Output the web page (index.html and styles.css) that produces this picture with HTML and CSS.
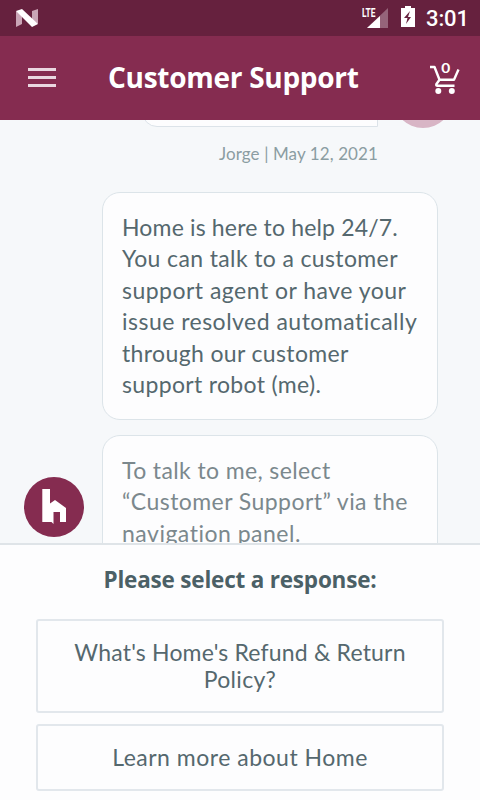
FILE: index.html
```
<!DOCTYPE html>
<html lang="en">
<head>
<meta charset="utf-8">
<title>Customer Support</title>
<link rel="stylesheet" href="styles.css">
</head>
<body>
<div class="app">
  <div class="status">
    <svg class="n-logo" width="24" height="20" viewBox="0 0 24 20"><path d="M1 3l6 4v9l-6 3zM17 3l6-2v15l-6-4z" fill="#c9a5b6"/><path d="M1 3l6-2 16 15-6 3z" fill="#fff"/></svg>
    <div class="status-right">
      <svg class="signal" width="28" height="24" viewBox="0 0 28 24"><path d="M26 3v20H5z" fill="#95647a"/><path d="M18 11v12H5z" fill="#fff"/><text x="0" y="12" class="lte" textLength="13.500" lengthAdjust="spacingAndGlyphs">LTE</text></svg>
      <svg class="battery" width="14" height="23" viewBox="0 0 14 23"><path d="M0 3h4V1h6v2h4v19H0z" fill="#fff"/><path d="M9 6l-6 7h3.500l-1.500 6 5-7H7z" fill="#66213e"/></svg>
      <span class="clock">3:01</span>
    </div>
  </div>
  <header class="bar">
    <div class="menu"><i></i><i></i><i></i></div>
    <h1>Customer Support</h1>
    <svg class="cart" width="34" height="36" viewBox="428 58 34 36" fill="none" stroke="#fff" stroke-width="2.400" stroke-linejoin="round"><path d="M430 65h4.500l5 12.800H454l4.500-10.300M439.500 77.800l-3.200 4.500q-.4 1.500 1.200 1.500h17"/><g fill="#fff" stroke="none"><circle cx="438.300" cy="89" r="3"/><circle cx="451.800" cy="89" r="3"/><text x="441.300" y="71" class="count" textLength="9" lengthAdjust="spacingAndGlyphs">0</text></g></svg>
  </header>
  <main class="chat">
    <div class="previous"><div class="prev-bubble"></div><div class="prev-avatar"></div></div>
    <div class="stamp"><span>Jorge | May 12, 2021</span></div>
    <div class="bubble">
      <p class="a1">Home is here to help 24/7.</p>
      <p class="a2">You can talk to a customer</p>
      <p class="a3">support agent or have your</p>
      <p class="a4">issue resolved automatically</p>
      <p class="a5">through our customer</p>
      <p class="a6">support robot (me).</p>
    </div>
    <div class="row">
      <svg class="avatar" width="60" height="60" viewBox="24 477 60 60"><circle cx="54" cy="507" r="30" fill="#852c50"/><path d="M42.300 489h7.700v14.500l5-3.500 11 8v14h-6v-10h-6.500v12l-2-2h-9.200z" fill="#fff"/></svg>
      <div class="bubble fading">
        <p class="b1">To talk to me, select</p>
        <p class="b2">“Customer Support” via the</p>
        <p class="b3">navigation panel.</p>
      </div>
    </div>
  </main>
  <section class="responses">
    <h2>Please select a response:</h2>
    <button class="tall"><span class="c1">What's Home's Refund &amp; Return</span><span class="c2">Policy?</span></button>
    <button><span class="c3">Learn more about Home</span></button>
  </section>
</div>
</body>
</html>
```
FILE: styles.css
```
* { box-sizing: border-box; }
body { margin: 0; font-family: Lato, "Liberation Sans", sans-serif; color: #55686e; }
h1, h2, p { margin: 0; }
svg { display: block; flex: none; }
.app { width: 480px; height: 800px; display: flex; flex-direction: column; overflow: hidden; background: #f6f8fa; }
.status { height: 36px; flex: none; background: #66213e; display: flex; justify-content: space-between; padding: 0 13px 0 15px; color: #fff; }
.n-logo { margin-top: 8px; }
.status-right { display: flex; }
.signal { margin: 5px 11px 0 0; }
.lte { font: 700 12px Roboto, sans-serif; fill: #fff; }
.battery { margin: 5px 11px 0 0; }
.clock { font: 500 22px/38px Roboto, sans-serif; width: 41px; white-space: nowrap; letter-spacing: -.1px; }
.bar { height: 84px; flex: none; background: #852c50; display: flex; align-items: center; padding: 0 18px 0 28px; color: #fff; }
.menu { width: 28px; display: grid; gap: 5px; margin-top: -1px; }
.menu i { height: 3px; background: #ead7e0; }
h1 { font: 700 28px/36px "Open Sans", sans-serif; letter-spacing: -.28px; margin: -2px 0 0 52px; width: 270px; white-space: nowrap; }
.cart { margin-left: 50px; }
.count { font: 700 14px Lato, sans-serif; }
.chat { height: 423px; flex: none; overflow: hidden; }
.previous { height: 8px; display: flex; }
.prev-bubble { width: 236px; height: 30px; margin: -23px 0 0 142px; border: 1px solid #dce3e9; border-radius: 18px 18px 0 18px; background: #fdfdfe; flex: none; }
.prev-avatar { width: 60px; height: 60px; margin: -52px 0 0 15px; border-radius: 50%; background: #d8b5c5; flex: none; }
.stamp { height: 64px; padding: 14px 0 0 219px; font-size: 17px; line-height: 24px; letter-spacing: .1px; color: #8b9da2; white-space: nowrap; }
.bubble { width: 336px; height: 228px; margin-left: 102px; padding: 19px 0 0 19px; border: 1px solid #dce4e9; border-radius: 18px; background: #fdfdfe; font-size: 23px; line-height: 31.450px; white-space: nowrap; }
.row { display: flex; margin-top: 15px; }
.avatar { margin: 42px 0 0 24px; }
.row .bubble { margin-left: 18px; color: #7b888d; height: 180px; }
.a1 { letter-spacing: .16px; }
.a2 { letter-spacing: .37px; }
.a3 { letter-spacing: .48px; }
.a4 { letter-spacing: .48px; }
.a5 { letter-spacing: .36px; }
.a6 { letter-spacing: .33px; }
.b1 { letter-spacing: .38px; }
.b2 { letter-spacing: .44px; }
.b3 { letter-spacing: .5px; }
.c1 { letter-spacing: .18px; }
.c2 { letter-spacing: .3px; }
.c3 { letter-spacing: .5px; }
.responses { flex: 1; background: #fdfdfe; border-top: 2px solid #dfe4e8; padding: 19px 36px 0; display: flex; flex-direction: column; }
h2 { font: 700 22.500px/32px "Open Sans", sans-serif; letter-spacing: -.2px; text-align: center; color: #4b6066; height: 55px; white-space: nowrap; }
button { width: 408px; height: 67px; flex: none; border: 2px solid #e2e7ec; border-radius: 3px; background: #fdfdfe; padding: 0; margin: 0; font: 23px/27px Lato, sans-serif; color: #55686e; display: flex; flex-direction: column; align-items: center; justify-content: center; white-space: nowrap; }
.tall { height: 94px; margin-bottom: 11px; }
```
